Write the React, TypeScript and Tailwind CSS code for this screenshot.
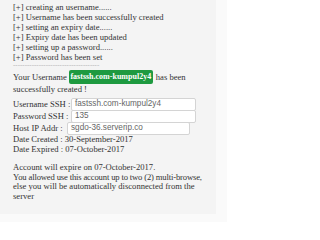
import React from "react";

const serif = { fontFamily: '"Liberation Serif", "Times New Roman", serif' };
const sans = { fontFamily: '"Liberation Sans", Arial, sans-serif' };

function Field({ label, value, lw, w }: { label: string; value: string; lw: string; w: string }) {
  return (
    <div className="flex items-center h-[12px]">
      <span className={`whitespace-nowrap ${lw}`}>{label}</span>
      <div
        className={`h-[13px] ${w} border border-[#d4d4d4] bg-white rounded-[2px] flex items-center px-[3px] text-[8.2px] text-[#666] whitespace-nowrap`}
        style={sans}
      >
        {value}
      </div>
    </div>
  );
}

export default function App() {
  const logs = [
    "creating an username......",
    "Username has been successfully created",
    "setting an expiry date......",
    "Expiry date has been updated",
    "setting up a password......",
    "Password has been set",
  ];
  return (
    <div className="w-[227px] h-[222px] bg-[#fafafa] overflow-hidden">
      <div
        className="w-[216px] h-[214px] bg-[#f4f4f4] pl-[13px] pt-[2px] text-[8.6px] leading-[10px] text-[#333]"
        style={serif}
      >
        {logs.map((l) => (
          <div key={l} className="whitespace-nowrap">[+] {l}</div>
        ))}
        <div className="text-[#aaa] leading-[7px] text-[7px] whitespace-nowrap">-------------------------------------</div>
        <div className="mt-[1px] flex items-center whitespace-nowrap h-[14px]">
          <span>Your Username</span>
          <span
            className="ml-[2px] mr-[3px] bg-[#1e9a40] text-white font-bold text-[8px] h-[14px] w-[84px] flex items-center justify-center rounded-[2px]"
            style={serif}
          >
            fastssh.com-kumpul2y4
          </span>
          <span>has been</span>
        </div>
        <div>successfully created !</div>
        <div className="mt-[4px] flex flex-col">
          <Field label="Username SSH :" value="fastssh.com-kumpul2y4" lw="w-[58px]" w="w-[125px]" />
          <Field label="Password SSH :" value="135" lw="w-[58px]" w="w-[125px]" />
          <Field label="Host IP Addr :" value="sgdo-36.serverip.co" lw="w-[54px]" w="w-[123px]" />
        </div>
        <div className="whitespace-nowrap">Date Created : 30-September-2017</div>
        <div className="whitespace-nowrap">Date Expired : 07-October-2017</div>
        <div className="mt-[9px] leading-[9.5px] whitespace-nowrap">
          <div>Account will expire on 07-October-2017.</div>
          <div className="tracking-[-0.15px]">You allowed use this account up to two (2) multi-browse,</div>
          <div>else you will be automatically disconnected from the</div>
          <div>server</div>
        </div>
      </div>
    </div>
  );
}
